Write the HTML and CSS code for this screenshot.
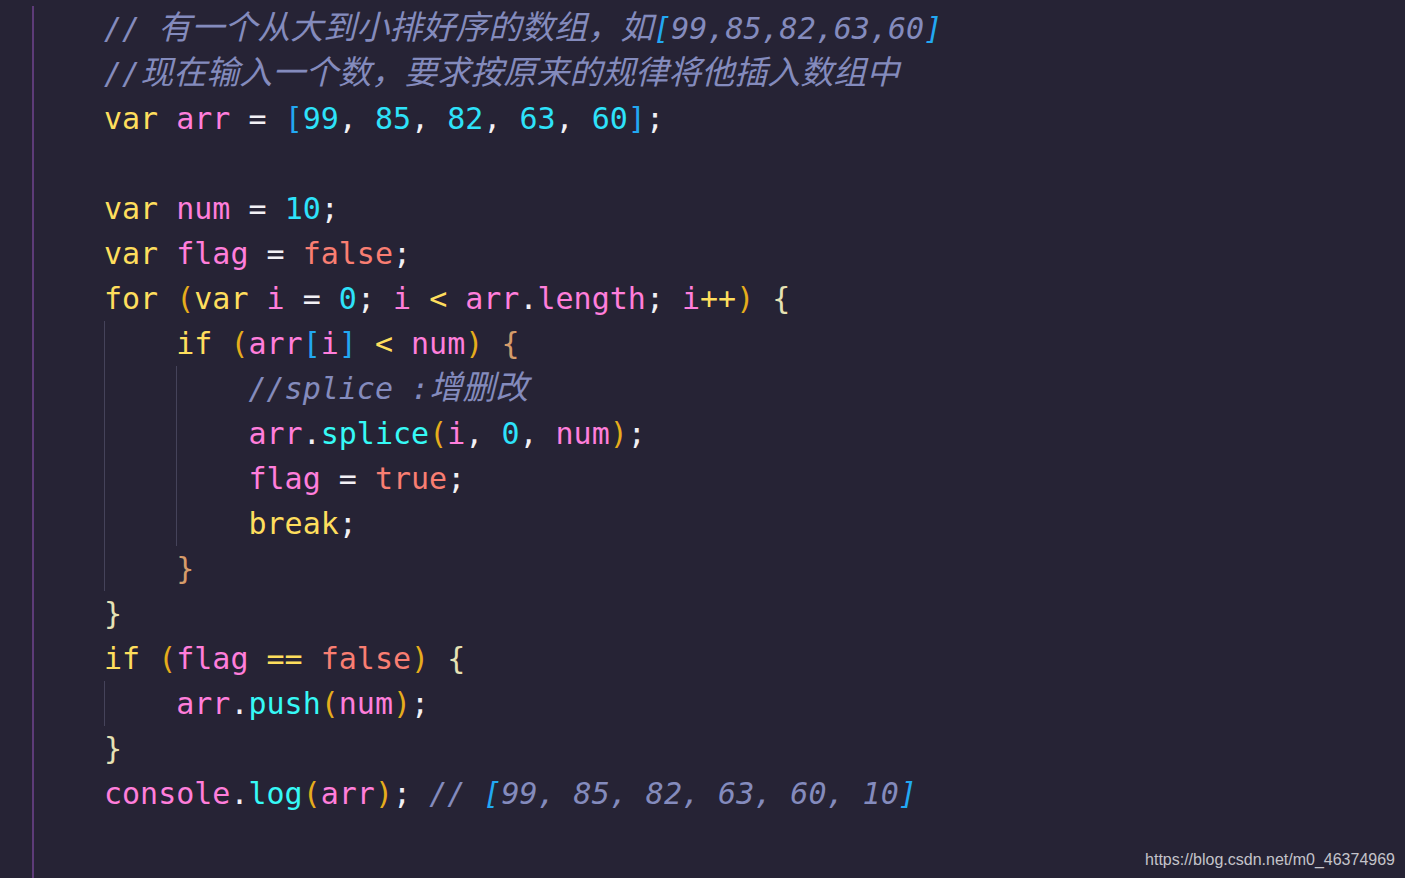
FILE: index.html
```html
<!DOCTYPE html>
<html lang="zh-CN">
<head>
<meta charset="utf-8">
<title>code</title>
<link rel="stylesheet" href="styles.css">
</head>
<body>
<div class="editor">
  <div class="gutter"></div>
  <div class="rule"></div>
  <div class="code">
    <div class="line"><span class="c">// </span><span class="c cjk">有一个从大到小排好序的数组，如</span><span class="c sq">[</span><span class="c">99,85,82,63,60</span><span class="c sq">]</span></div>
    <div class="line"><span class="c">//</span><span class="c cjk">现在输入一个数，要求按原来的规律将他插入数组中</span></div>
    <div class="line"><span class="k">var</span> <span class="v">arr</span> <span class="p">=</span> <span class="sq">[</span><span class="n">99</span><span class="p">,</span> <span class="n">85</span><span class="p">,</span> <span class="n">82</span><span class="p">,</span> <span class="n">63</span><span class="p">,</span> <span class="n">60</span><span class="sq">]</span><span class="p">;</span></div>
    <div class="line"></div>
    <div class="line"><span class="k">var</span> <span class="v">num</span> <span class="p">=</span> <span class="n">10</span><span class="p">;</span></div>
    <div class="line"><span class="k">var</span> <span class="v">flag</span> <span class="p">=</span> <span class="b">false</span><span class="p">;</span></div>
    <div class="line"><span class="k">for</span> <span class="pr">(</span><span class="k">var</span> <span class="v">i</span> <span class="p">=</span> <span class="n">0</span><span class="p">;</span> <span class="v">i</span> <span class="o">&lt;</span> <span class="v">arr</span><span class="p">.</span><span class="v">length</span><span class="p">;</span> <span class="v">i</span><span class="o">++</span><span class="pr">)</span> <span class="cb1">{</span></div>
    <div class="line"><span class="ind">    </span><span class="k">if</span> <span class="pr">(</span><span class="v">arr</span><span class="sq">[</span><span class="v">i</span><span class="sq">]</span> <span class="o">&lt;</span> <span class="v">num</span><span class="pr">)</span> <span class="cb2">{</span></div>
    <div class="line"><span class="ind">    </span><span class="ind">    </span><span class="c">//splice :</span><span class="c cjk">增删改</span></div>
    <div class="line"><span class="ind">    </span><span class="ind">    </span><span class="v">arr</span><span class="p">.</span><span class="f">splice</span><span class="pr">(</span><span class="v">i</span><span class="p">,</span> <span class="n">0</span><span class="p">,</span> <span class="v">num</span><span class="pr">)</span><span class="p">;</span></div>
    <div class="line"><span class="ind">    </span><span class="ind">    </span><span class="v">flag</span> <span class="p">=</span> <span class="b">true</span><span class="p">;</span></div>
    <div class="line"><span class="ind">    </span><span class="ind">    </span><span class="k">break</span><span class="p">;</span></div>
    <div class="line"><span class="ind">    </span><span class="cb2">}</span></div>
    <div class="line"><span class="cb1">}</span></div>
    <div class="line"><span class="k">if</span> <span class="pr">(</span><span class="v">flag</span> <span class="o">==</span> <span class="b">false</span><span class="pr">)</span> <span class="cb1">{</span></div>
    <div class="line"><span class="ind">    </span><span class="v">arr</span><span class="p">.</span><span class="f">push</span><span class="pr">(</span><span class="v">num</span><span class="pr">)</span><span class="p">;</span></div>
    <div class="line"><span class="cb1">}</span></div>
    <div class="line"><span class="v">console</span><span class="p">.</span><span class="f">log</span><span class="pr">(</span><span class="v">arr</span><span class="pr">)</span><span class="p">;</span> <span class="c">// </span><span class="c sq">[</span><span class="c">99, 85, 82, 63, 60, 10</span><span class="c sq">]</span></div>
  </div>
</div>
<div class="watermark">https://blog.csdn.net/m0_46374969</div>
</body>
</html>
```

FILE: styles.css
```css
html, body {
  margin: 0;
  padding: 0;
  height: 100%;
  background: #262335;
  overflow: hidden;
}

.editor {
  display: flex;
  height: 100vh;
}

.gutter {
  width: 32px;
  flex: none;
}

.rule {
  width: 2px;
  flex: none;
  margin-top: 6px;
  background: #5d3b78;
}

.code {
  padding: 6px 0 0 70px;
  font-family: "DejaVu Sans Mono", "Noto Sans CJK SC", monospace;
  font-size: 30px;
  color: #f2f0f5;
}

.line {
  height: 45px;
  line-height: 45px;
  white-space: pre;
}

.ind {
  display: inline-block;
  height: 45px;
  vertical-align: top;
  box-shadow: inset 1px 0 0 #45435a;
}

.cjk {
  font-family: "Noto Sans CJK SC", sans-serif;
  font-size: 33px;
  line-height: 30px;
}

.k { color: #fede5d; }
.v { color: #ff7edb; }
.n { color: #2ee2fa; }
.f { color: #36f9f6; }
.b { color: #f97e72; }
.o { color: #fede5d; }
.p { color: #f2f0f5; }
.pr { color: #e6ad1c; }
.sq { color: #22a8f2; }
.cb1 { color: #e6e2b4; }
.cb2 { color: #d69c6a; }

.c {
  color: #848bbd;
  font-style: italic;
}

.c.sq { color: #22a8f2; }

.watermark {
  position: absolute;
  right: 10px;
  bottom: 9px;
  font-family: "Liberation Sans", Arial, sans-serif;
  font-size: 16px;
  color: #c4c3ca;
}
```
